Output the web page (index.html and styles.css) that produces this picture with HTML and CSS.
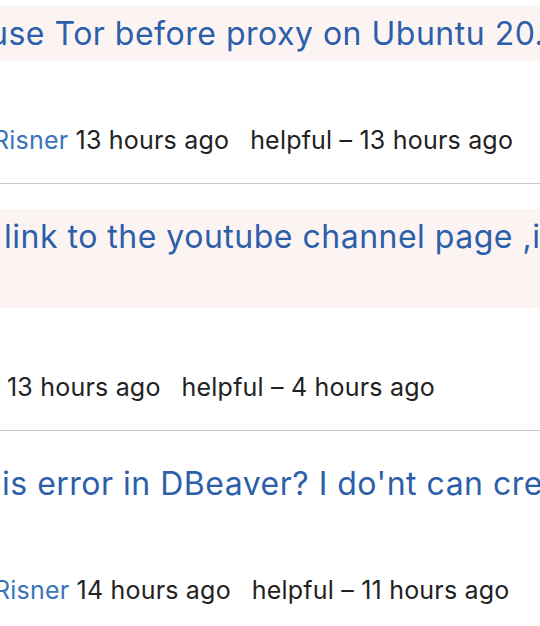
FILE: index.html
```html
<!DOCTYPE html>
<html lang="en">
<head>
<meta charset="utf-8">
<title>Questions</title>
<link rel="stylesheet" href="styles.css">
</head>
<body>
<main class="list">
  <article class="item">
    <h3 class="title title--hot title--r1"><a href="#">use Tor before proxy on Ubuntu 20.</a></h3>
    <div class="meta meta--r1"><a class="author" href="#">Risner</a> 13 hours ago<span class="activity">helpful – 13 hours ago</span></div>
  </article>
  <article class="item">
    <h3 class="title title--hot title--tall title--r2"><a href="#">link to the youtube channel page ,i</a></h3>
    <div class="meta meta--r2">13 hours ago<span class="activity">helpful – 4 hours ago</span></div>
  </article>
  <article class="item">
    <h3 class="title title--r3"><a href="#">is error in DBeaver? I do'nt can cre</a></h3>
    <div class="meta meta--r3"><a class="author" href="#">Risner</a> 14 hours ago<span class="activity">helpful – 11 hours ago</span></div>
  </article>
</main>
</body>
</html>
```
FILE: styles.css
```css
html, body {
  margin: 0;
  padding: 0;
  background: #ffffff;
}
body {
  width: 540px;
  height: 626px;
  overflow: hidden;
  font-family: Inter, "Liberation Sans", Arial, sans-serif;
}
.list {
  display: flex;
  flex-direction: column;
}
.item {
  padding: 25px 0 26px;
  border-bottom: 1px solid #c6c6c6;
}
.item:first-child {
  padding-top: 6px;
}
.title {
  margin: 0;
  padding: 6px 0 5px;
  font-size: 32px;
  font-weight: 400;
  line-height: 44px;
  letter-spacing: 0.5px;
  white-space: nowrap;
}
.title a {
  display: inline-block;
  color: #2c5fa9;
  text-decoration: none;
}
.title--hot {
  background: #fcf3f3;
}
.title--tall {
  min-height: 88px;
}
.meta {
  margin-top: 62px;
  font-size: 25px;
  line-height: 34px;
  letter-spacing: 0.2px;
  color: #222222;
  white-space: nowrap;
}
.author {
  color: #3b74ba;
  text-decoration: none;
}
.activity {
  margin-left: 21px;
}
.title--r1 a { margin-left: -11px; }
.title--r2 a { margin-left: 4px; }
.title--r3 a { margin-left: 2px; }
.meta--r1 { margin-left: -7px; }
.meta--r2 { padding-left: 7px; }
.meta--r3 { margin-left: -6px; }
```
